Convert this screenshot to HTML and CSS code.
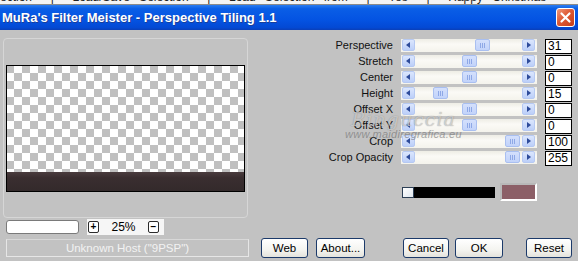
FILE: index.html
```html
<html>
    <head>
        <title>Perspective Tiling</title>
        <link rel="stylesheet" href="styles.css">
    </head>
    <body>
        <div class="topstrip"><span class="topstrip-text">ection &nbsp;| &nbsp;Load/Save Selection &nbsp;| &nbsp;Load Selection from &nbsp;| &nbsp;Yes &nbsp;| &nbsp;Happy Christmas</span></div>
        <div class="titlebar">
            <span class="title">MuRa's Filter Meister - Perspective Tiling 1.1</span>
            <span class="close">
                <svg width="13" height="13" viewBox="0 0 13 13"><path d="M2.5 2.5 L10.5 10.5 M10.5 2.5 L2.5 10.5" stroke="#fff" stroke-width="2.2" stroke-linecap="round"/></svg>
            </span>
        </div>
        <div class="client">
            <div class="upper">
                <div class="leftcol">
                    <div class="groupbox">
                        <div class="preview"><div class="preview-band"></div></div>
                    </div>
                    <div class="zoomrow">
                        <div class="field"></div>
                        <div class="zoombox">
                            <span class="tiny">+</span>
                            <span class="zoomtext">25%</span>
                            <span class="tiny">&minus;</span>
                        </div>
                    </div>
                </div>
                <div class="controls">
                    <div class="sliders">
                        <div class="label">Perspective</div>
                        <div class="scroll"><span class="arrow left"></span><span class="thumb" style="left:74px"></span><span class="arrow right"></span></div>
                        <div class="value">31</div>

                        <div class="label">Stretch</div>
                        <div class="scroll"><span class="arrow left"></span><span class="thumb" style="left:61px"></span><span class="arrow right"></span></div>
                        <div class="value">0</div>

                        <div class="label">Center</div>
                        <div class="scroll"><span class="arrow left"></span><span class="thumb" style="left:61px"></span><span class="arrow right"></span></div>
                        <div class="value">0</div>

                        <div class="label">Height</div>
                        <div class="scroll"><span class="arrow left"></span><span class="thumb" style="left:32px"></span><span class="arrow right"></span></div>
                        <div class="value">15</div>

                        <div class="label">Offset X</div>
                        <div class="scroll"><span class="arrow left"></span><span class="thumb" style="left:61px"></span><span class="arrow right"></span></div>
                        <div class="value">0</div>

                        <div class="label">Offset Y</div>
                        <div class="scroll"><span class="arrow left"></span><span class="thumb" style="left:61px"></span><span class="arrow right"></span></div>
                        <div class="value">0</div>

                        <div class="label">Crop</div>
                        <div class="scroll"><span class="arrow left"></span><span class="thumb" style="left:104px"></span><span class="arrow right"></span></div>
                        <div class="value">100</div>

                        <div class="label">Crop Opacity</div>
                        <div class="scroll"><span class="arrow left"></span><span class="thumb" style="left:104px"></span><span class="arrow right"></span></div>
                        <div class="value">255</div>
                    </div>
                    <div class="swatches">
                        <div class="gradient"><span class="chip"></span></div>
                        <div class="colour"></div>
                    </div>
                    <div class="watermark">
                        <span class="wm-name">Ringuccia</span>
                        <span class="wm-url">www.maidiregrafica.eu</span>
                    </div>
                </div>
            </div>
            <div class="lower">
                <div class="status">Unknown Host ("9PSP")</div>
                <div class="buttons">
                    <button class="btn">Web</button>
                    <button class="btn about">About...</button>
                    <button class="btn cancel">Cancel</button>
                    <button class="btn ok">OK</button>
                    <button class="btn reset">Reset</button>
                </div>
            </div>
        </div>
    </body>
</html>
```

FILE: styles.css
```css
html {
    background-color: #c2c2c2;
}
body {
    margin: 0;
    width: 578px;
    height: 261px;
    overflow: hidden;
    font-family: "Liberation Sans", Arial, sans-serif;
    font-size: 11px;
    color: #000;
    background-color: #c2c2c2;
}
.topstrip {
    height: 4px;
    overflow: hidden;
    background: #f4f4f4;
    border-bottom: 1px solid #8a8a8a;
}
.topstrip-text {
    display: block;
    margin-top: -9px;
    font-size: 12px;
    line-height: 12px;
    white-space: nowrap;
    word-spacing: 6px;
    color: #222;
}
.titlebar {
    height: 25px;
    display: flex;
    align-items: center;
    padding-left: 2px;
    padding-right: 3px;
    background: linear-gradient(#2a7cf0 0%, #0a5ee6 15%, #0453e2 60%, #0349d4 90%, #0a3fb8 100%);
}
.title {
    color: #fff;
    font-weight: bold;
    font-size: 13px;
    text-shadow: 1px 1px 0 #1a3f9a;
    flex: 1;
}
.close {
    width: 19px;
    height: 19px;
    box-sizing: border-box;
    border: 1px solid #fff;
    border-radius: 3px;
    background: linear-gradient(135deg, #f09a7c, #de5a35 45%, #c63d17);
    display: flex;
    align-items: center;
    justify-content: center;
}
.client {
    padding: 8px 6px 0 3px;
}
.upper {
    display: flex;
    height: 201px;
}
.leftcol {
    width: 245px;
}
.groupbox {
    height: 180px;
    box-sizing: border-box;
    border: 1px solid #d6d6d6;
    border-radius: 4px;
    padding: 26px 2px 0 2px;
}
.preview {
    width: 239px;
    height: 127px;
    box-sizing: border-box;
    border: 1px solid #000;
    background-color: #fff;
    background-image:
        linear-gradient(45deg, #c0c0c0 25%, transparent 25%, transparent 75%, #c0c0c0 75%),
        linear-gradient(45deg, #c0c0c0 25%, transparent 25%, transparent 75%, #c0c0c0 75%);
    background-size: 16px 16px;
    background-position: 7px -1px, 15px 7px;
    display: flex;
    align-items: flex-end;
}
.preview-band {
    width: 100%;
    height: 19px;
    background: linear-gradient(#4a3c3e, #3a2e30 30%, #332a2b);
}
.zoomrow {
    display: flex;
    align-items: center;
    margin-top: 1px;
    padding-left: 3px;
    height: 16px;
}
.field {
    width: 73px;
    height: 14px;
    box-sizing: border-box;
    background: #fff;
    border: 1px solid #7a7a7a;
    border-radius: 3px;
}
.zoombox {
    margin-left: 8px;
    width: 76px;
    height: 16px;
    background: #f6f6f6;
    display: flex;
    align-items: center;
    padding-left: 1px;
}
.tiny {
    width: 11px;
    height: 12px;
    box-sizing: border-box;
    border: 1px solid #2b2b2b;
    border-radius: 2px;
    background: #fff;
    font-size: 10px;
    line-height: 9px;
    text-align: center;
    font-weight: bold;
}
.zoomtext {
    width: 49px;
    text-align: center;
    font-size: 12px;
}
.controls {
    position: relative;
    margin-left: 52px;
    padding-top: 1px;
}
.sliders {
    display: grid;
    grid-template-columns: 93px 136px 27px;
    grid-auto-rows: 16px;
    column-gap: 8px;
}
.label {
    text-align: right;
    font-size: 11px;
    line-height: 13px;
    white-space: nowrap;
    color: #111;
}
.scroll {
    position: relative;
    height: 13px;
    background: linear-gradient(#eeede5, #fbfaf6 40%, #f4f3ec);
    display: flex;
    justify-content: space-between;
    padding: 0 2px 0 1px;
}
.arrow {
    width: 13px;
    height: 12px;
    box-sizing: border-box;
    border: 1px solid #b6c9f2;
    border-radius: 2px;
    background: linear-gradient(#dbe6fd, #bccff9);
    position: relative;
}
.arrow::after {
    content: "";
    position: absolute;
    top: 2px;
    border-top: 3.5px solid transparent;
    border-bottom: 3.5px solid transparent;
}
.arrow.left::after {
    left: 3px;
    border-right: 4px solid #2d4b9a;
}
.arrow.right::after {
    left: 4px;
    border-left: 4px solid #2d4b9a;
}
.thumb {
    position: absolute;
    top: 0;
    width: 15px;
    height: 12px;
    box-sizing: border-box;
    border: 1px solid #a9bff0;
    border-radius: 2px;
    background:
        linear-gradient(90deg, transparent 4px, #8ea8e6 4px, #8ea8e6 5px, transparent 5px, transparent 6px, #8ea8e6 6px, #8ea8e6 7px, transparent 7px, transparent 8px, #8ea8e6 8px, #8ea8e6 9px, transparent 9px) center / 13px 5px no-repeat,
        linear-gradient(#d4e0fc, #c2d3fa);
}
.value {
    height: 15px;
    box-sizing: border-box;
    border: 1px solid #000;
    background: #fff;
    font-size: 12px;
    line-height: 13px;
    padding-left: 2px;
}
.swatches {
    display: flex;
    align-items: center;
    margin-top: 16px;
    margin-left: 102px;
}
.gradient {
    width: 93px;
    height: 11px;
    background: #000;
    display: flex;
}
.chip {
    width: 12px;
    height: 11px;
    box-sizing: border-box;
    border: 1px solid #2d3f55;
    background: linear-gradient(135deg, #ffffff, #dfe6ee);
}
.colour {
    margin-left: 5px;
    width: 37px;
    height: 18px;
    box-sizing: border-box;
    border: 2px solid #fff;
    border-top-color: #b8b8b8;
    border-left-color: #b8b8b8;
    background: #8c5f67;
}
.watermark {
    position: absolute;
    left: 45px;
    top: 72px;
    display: flex;
    flex-direction: column;
    align-items: center;
    pointer-events: none;
}
.wm-name {
    font-family: "DejaVu Serif", serif;
    font-style: italic;
    font-size: 19px;
    line-height: 19px;
    letter-spacing: 1px;
    color: rgba(238, 238, 238, 0.6);
    text-shadow: 0 0 1px rgba(80, 80, 80, 0.6);
}
.wm-url {
    font-style: italic;
    font-size: 11px;
    line-height: 10px;
    letter-spacing: 0.3px;
    color: rgba(100, 100, 100, 0.55);
}
.lower {
    display: flex;
    align-items: flex-start;
}
.status {
    margin-left: 3px;
    width: 244px;
    height: 18px;
    box-sizing: border-box;
    border: 1px solid #e6e6e6;
    border-top-color: #d8d8d8;
    color: #f2f2f2;
    font-size: 11.5px;
    line-height: 16px;
    text-align: center;
}
.buttons {
    display: flex;
    margin-left: 12px;
    margin-top: -1px;
}
.btn {
    width: 47px;
    height: 20px;
    box-sizing: border-box;
    padding: 0;
    border: 1px solid #1c3a6a;
    border-radius: 3px;
    background: linear-gradient(#ffffff, #f4f4f0 60%, #e4e3dc);
    font-family: "Liberation Sans", Arial, sans-serif;
    font-size: 11.5px;
    color: #000;
}
.about {
    margin-left: 8px;
    width: 49px;
}
.cancel {
    margin-left: 38px;
    width: 46px;
}
.ok {
    margin-left: 6px;
    width: 48px;
}
.reset {
    margin-left: 23px;
    width: 46px;
}
```
